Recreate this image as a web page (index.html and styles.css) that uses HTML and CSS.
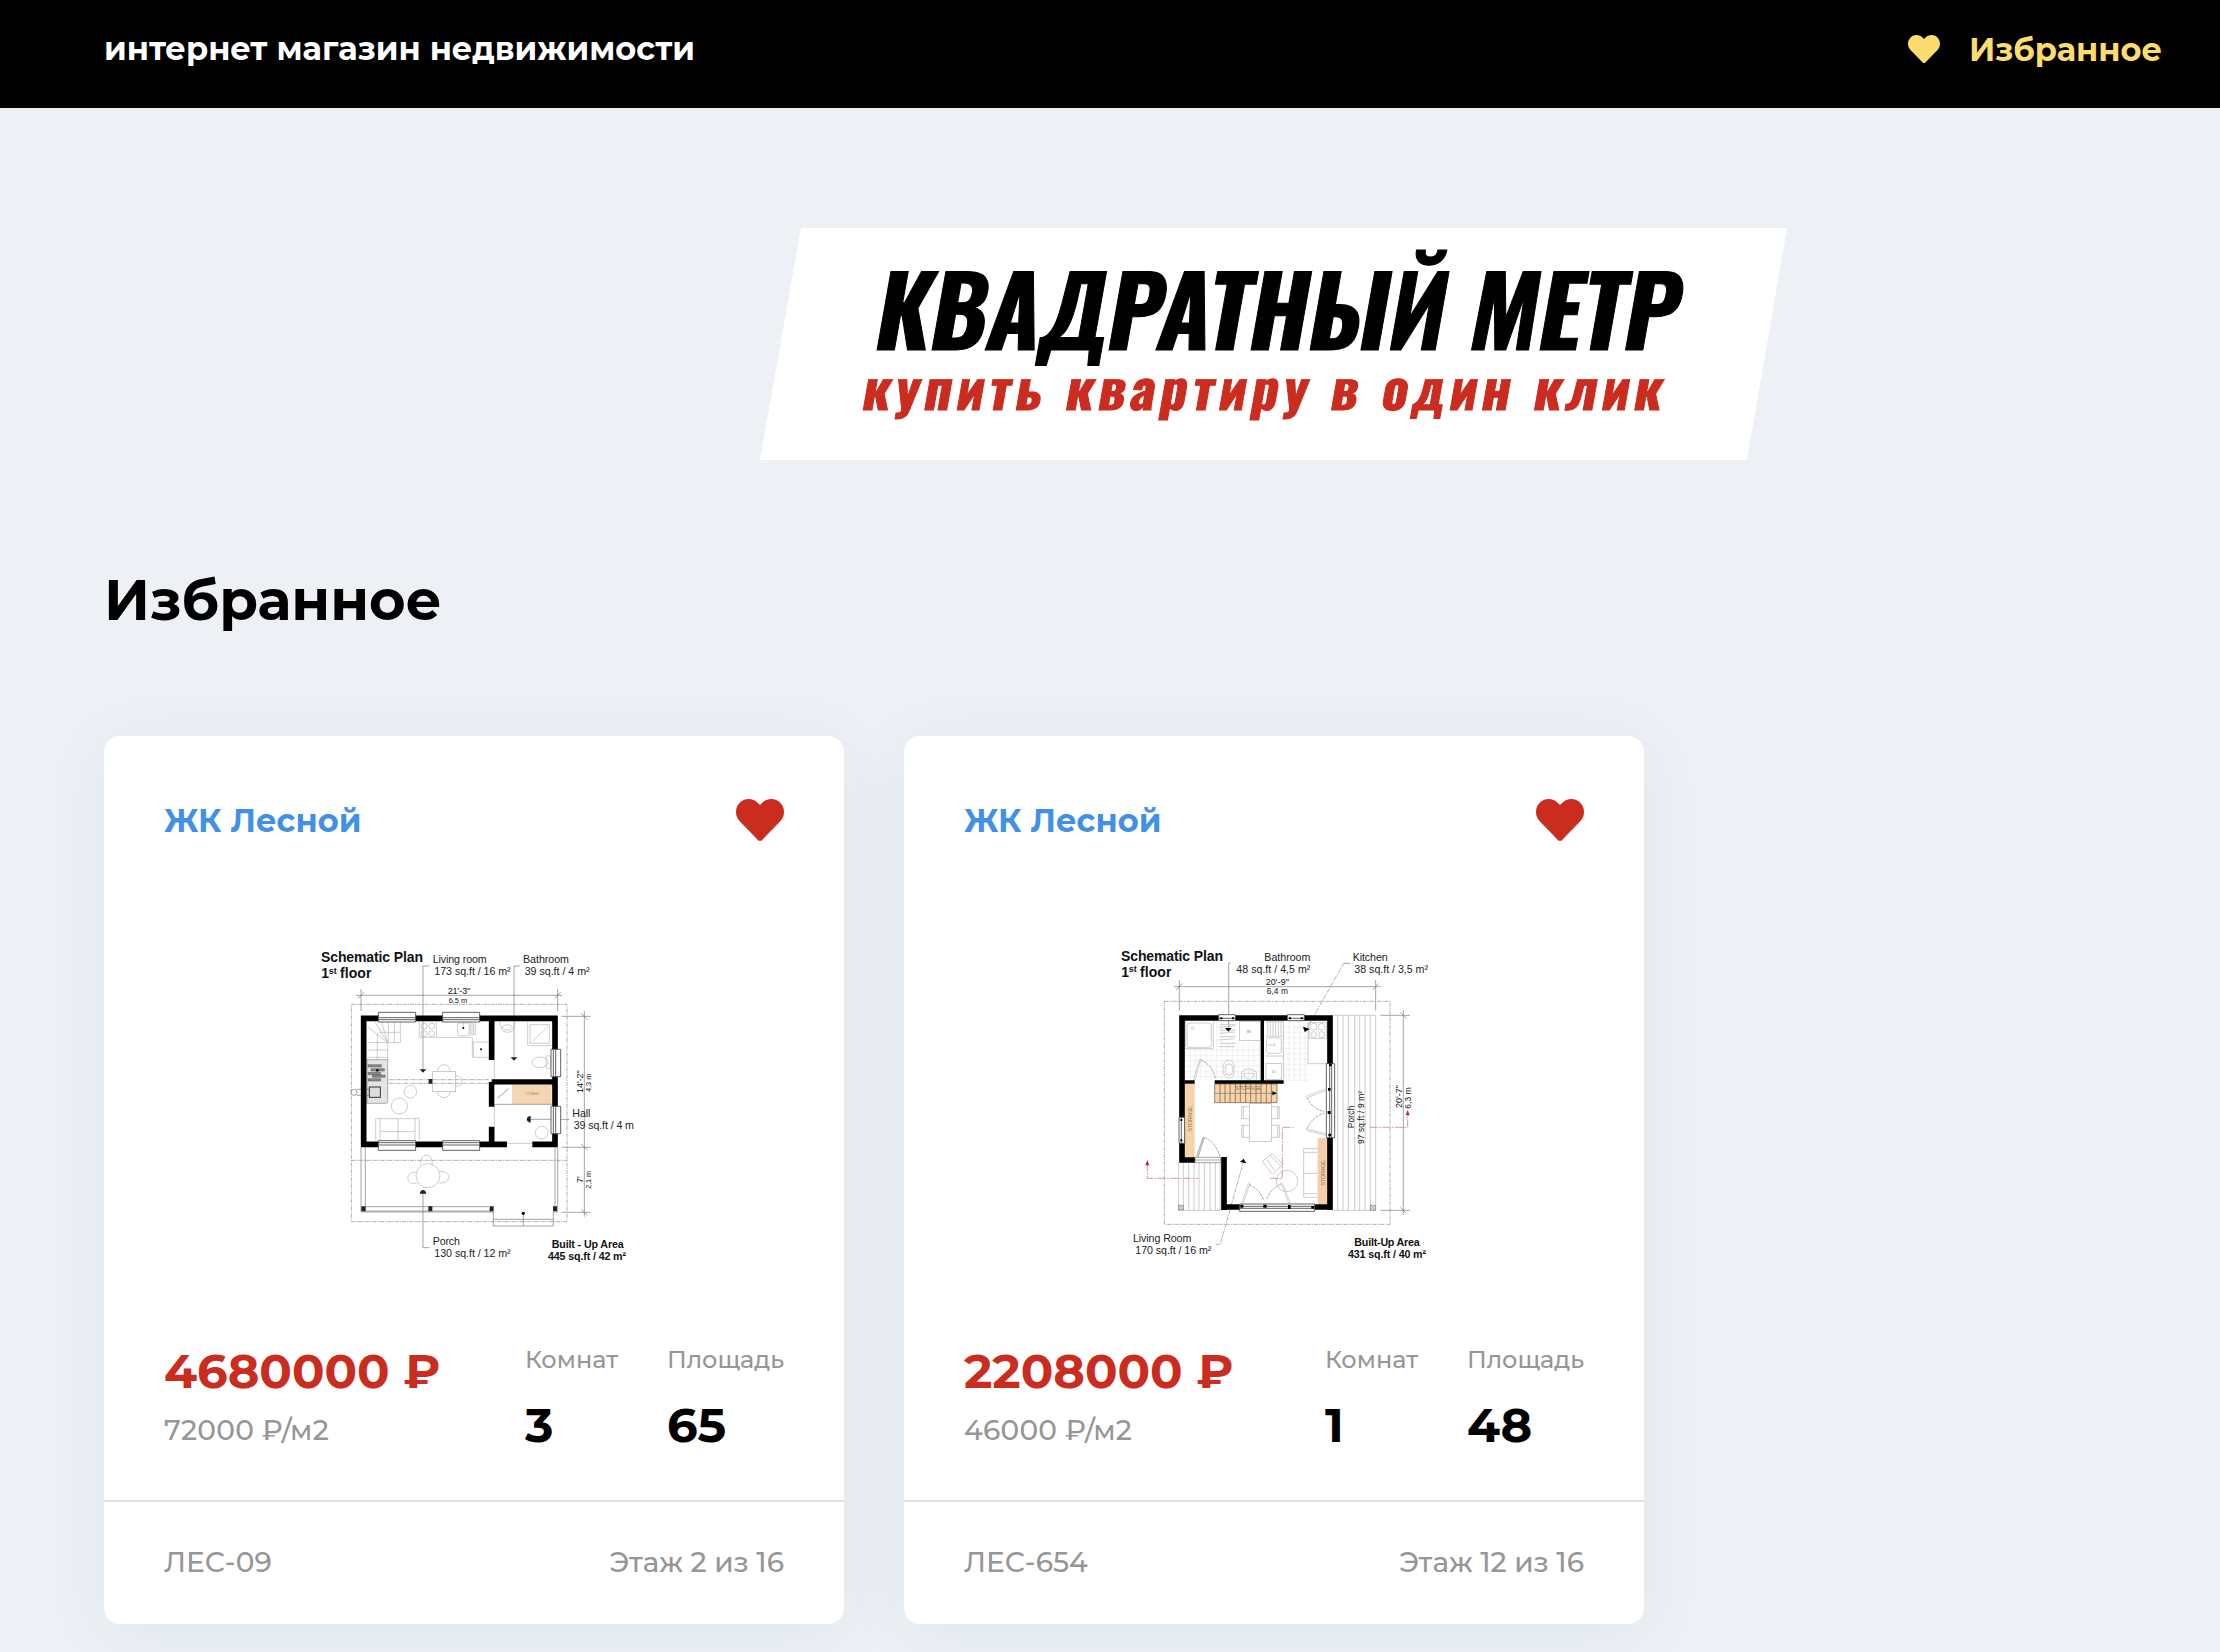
FILE: index.html
```html
<!DOCTYPE html>
<html lang="ru">
<head>
<meta charset="utf-8">
<title>Избранное</title>
<link rel="stylesheet" href="styles.css">
</head>
<body>
<svg class="sprite" width="0" height="0">
  <symbol id="heart" viewBox="0 32 512 448"><path d="M462.3 62.6C407.5 15.9 326 24.3 275.7 76.2L256 96.5l-19.7-20.3C186.1 24.3 104.5 15.9 49.7 62.6c-62.8 53.6-66.1 149.8-9.9 207.9l193.5 199.8c12.5 12.9 32.8 12.9 45.3 0l193.5-199.8c56.3-58.1 53-154.3-9.8-207.9z"/></symbol>
</svg>
<header class="topbar">
  <div class="topbar-name">интернет магазин недвижимости</div>
  <a class="topbar-fav"><svg class="topbar-heart"><use href="#heart"/></svg><span>Избранное</span></a>
</header>
<main class="page">
  <svg class="logo" viewBox="0 0 1026 232" width="1026" height="232">
    <path d="M40 0H1026L986 232H-1z" fill="#fff"/>
    <text class="logo-title" transform="translate(110 122) skewX(-10)" textLength="804" lengthAdjust="spacingAndGlyphs">КВАДРАТНЫЙ МЕТР</text>
    <text class="logo-sub" transform="translate(99.5 182) skewX(-10)" textLength="804" lengthAdjust="spacingAndGlyphs">купить квартиру в один клик</text>
  </svg>
  <h1 class="title">Избранное</h1>
  <section class="cards">
    <article class="card">
      <div class="card-head"><a class="card-name">ЖК Лесной</a><svg class="card-heart"><use href="#heart"/></svg></div>
      <svg class="plan" viewBox="42 36 960 960">
        <g class="thin">
          <path d="M168 196H787M183 177V243M773 177V243M174 206l18-20M764 206l18-20M853 243V860M785 259H872M785 652H872M785 847H872M843 250l20 19M843 642l20 19M843 838l20 19"/>
          <path d="M388 108H369V425M660 108H642V385M388 953H369V785M683 568H808"/>
          <path d="M183 652V846H580M773 652V846H760M196 652V830H567M765 652V830M580 846V888H760V846M580 868H760M670 850V888M190 843H578"/>
        </g>
        <path class="dash" d="M154 223H801V875H154zM154 691H801M202 449H568M202 460H568"/>
        <g class="pale">
          <path d="M202 338H263M202 360H263M202 382H263M232 310V420M263 338L202 290M263 338L225 276M263 338L245 276M263 338V390M235 307H300M265 276V338H301V276M283 276V338"/>
          <path d="M358 276V322H517V382H568M409 276V322M520 336H568M520 336V382"/>
          <circle cx="372" cy="288" r="9"/><circle cx="395" cy="288" r="9"/><circle cx="372" cy="311" r="9"/><circle cx="395" cy="311" r="9"/>
          <rect x="473" y="279" width="34" height="38" rx="5"/><path d="M490 279V296M511 279V317M516 279V317M521 279V317M526 279V317"/>
          <path d="M601 276Q598 306 622 307Q648 306 644 276M607 290Q622 278 637 290Q636 300 622 300Q608 300 607 290"/>
          <path d="M683 276V347H755M690 284H748V340H690zM697 334L744 290"/>
          <ellipse cx="720" cy="397" rx="24" ry="16"/><rect x="738" y="378" width="14" height="38" rx="3"/>
          <rect x="398" y="425" width="69" height="60"/><path d="M413 424Q415 404 432 404Q448 405 450 424M413 486Q415 503 432 503Q448 502 450 486M468 436Q486 439 486 454Q486 467 468 470"/>
          <circle cx="298" cy="528" r="24"/><circle cx="331" cy="485" r="19"/>
          <path d="M227 566H358V630M227 566V630M240 566V630M294 566V630M345 566V630M240 605H345"/>
          <circle cx="725" cy="608" r="19"/><circle cx="384" cy="737" r="36"/>
          <path d="M362 706Q361 676 379 675Q397 676 397 706M350 727Q325 724 323 744Q327 764 352 761M418 724Q444 724 447 741Q444 761 417 759"/>
          <path d="M583 390V448M583 530V590M621 640H699"/>
        </g>
        <path d="M201 389H263V514Q263 520 257 520H201z" fill="#e4e4e4" stroke="#888" stroke-width="2"/>
        <path d="M204 404h40v7h-40zM213 416h40v7h-40zM204 427h38v7h-38zM217 435h38v7h-38zM204 446h38v7h-38z" fill="#888" stroke="#555" stroke-width="1.5"/>
        <path d="M170 478H208V496H170" class="thin"/><circle cx="162" cy="487" r="9" class="thin"/><rect x="208" y="471" width="33" height="31" fill="#ddd" stroke="#333" stroke-width="3"/>
        <path class="wall" d="M183 265H773M191 258V650M183 643H621M697 643H773M575 265V390M575 456H765M765 258V650M575 456V530M575 590V650"/>
        <rect x="584" y="464" width="52" height="58" fill="#fff"/><rect x="636" y="464" width="119" height="58" fill="#f5d5b3"/><path class="thin" d="M584 523H757M592 505L626 476"/><text x="676" y="495" font-size="9" fill="#aa8f70" textLength="41">STORAGE</text>
        <g class="window"><path d="M235 247H347V276H235zM235 263H347M235 269H347"/><path d="M428 247H539V276H428zM428 263H539M428 269H539"/><path d="M235 632H347V661H235zM235 638H347M235 645H347"/><path d="M428 632H539V661H428zM428 638H539M428 645H539"/><path d="M753 358H782V440H753zM760 358V440M767 358V440"/><path d="M753 529H782V611H753zM760 529V611M767 529V611"/></g>
        <path d="M359 418H379L369 428zM632 382H652L642 392zM359 791Q361 781 369 780Q377 781 379 791zM692 558V578Q681 577 680 568Q681 559 692 558zM386 447h11v14h-11zM184 829h13v15h-13zM385 829h12v15h-12zM569 829h12v15h-12zM759 829h12v15h-12z" fill="#222"/><circle cx="670" cy="850" r="5"/><circle cx="543" cy="358" r="3"/><circle cx="490" cy="294" r="3"/><circle cx="232" cy="421" r="4"/>
        <g class="bold"><text x="63" y="96" font-size="42" textLength="306">Schematic Plan</text><text x="64" y="145" font-size="42">1</text><text x="86" y="131" font-size="27" textLength="24">st</text><text x="120" y="145" font-size="42" textLength="94">floor</text>
          <text x="755" y="953" font-size="32" textLength="216">Built - Up Area</text><text x="744" y="989" font-size="32" textLength="234">445 sq.ft / 42 m²</text></g>
        <g class="label"><text x="398" y="100" textLength="162">Living room</text><text x="403" y="136" textLength="229">173 sq.ft / 16 m²</text><text x="669" y="100" textLength="138">Bathroom</text><text x="674" y="136" textLength="195">39 sq.ft / 4 m²</text><text x="817" y="560" textLength="54">Hall</text><text x="821" y="597" textLength="181">39 sq.ft / 4 m</text><text x="398" y="945" textLength="82">Porch</text><text x="403" y="982" textLength="229">130 sq.ft / 12 m²</text></g>
        <g class="dim"><text x="443" y="192" textLength="68" font-size="27">21'-3"</text><text x="446" y="219" textLength="55" font-size="22">6,5 m</text><text transform="translate(848 489) rotate(-90)" textLength="68" font-size="27">14'-2"</text><text transform="translate(872 486) rotate(-90)" textLength="55" font-size="22">4,3 m</text><text transform="translate(848 759) rotate(-90)" font-size="27">7'</text><text transform="translate(872 776) rotate(-90)" textLength="53" font-size="22">2,1 m</text></g>
      </svg>
      <div class="info">
        <div class="price-col"><div class="price">4680000 ₽</div><div class="ppm">72000 ₽/м2</div></div>
        <div class="stat"><div class="stat-label">Комнат</div><div class="stat-value">3</div></div>
        <div class="stat area"><div class="stat-label">Площадь</div><div class="stat-value">65</div></div>
      </div>
      <div class="card-foot"><span>ЛЕС-09</span><span class="floor">Этаж 2 из 16</span></div>
    </article>
    <article class="card">
      <div class="card-head"><a class="card-name">ЖК Лесной</a><svg class="card-heart"><use href="#heart"/></svg></div>
      <svg class="plan" viewBox="42 36 960 960">
        <g class="thin"><path d="M222 170H842M238 150V242M827 150V242M229 180l18-20M818 180l18-20M910 240V855M841 256H930M841 841H930M901 247l19 19M901 832l19 19"/><path d="M392 99H386V295M750 100H731"/></g>
        <path class="dash" d="M193 214H870V883H193zM731 100L620 296M347 943H361L431 693"/>
        <g class="pale"><path d="M697 256H827V841H697M713 256V841M729 256V841M745 256V841M764 256V841M779 256V841M795 256V841M811 256V841"/><path d="M236 697V841H365M250 697V841M266 697V841M282 697V841M297 697V841M313 697V841M330 697V841M346 697V841M360 697V841"/></g>
        <g class="grid"><path d="M255 360H483M255 376H483M255 392H483M255 408H483M255 424H483M255 440H483M270 355V450M286 355V450M302 355V450M318 355V450M334 355V450M350 275V450M366 275V450M382 335V450M398 335V450M414 335V450M430 335V450M446 335V450M462 335V450M478 335V450"/><path d="M551 275V452M567 275V452M583 275V452M599 275V452M615 275V452M551 291H624M551 307H624M551 323H624M551 339H624M551 355H624M551 371H624M551 387H624M551 403H624M551 419H624M551 435H624M551 451H624"/></g>
        <g class="pale">
          <path d="M256 273V356H340V273M359 284H407M356 292L404 288M359 300H407M357 310L404 306M359 320H407M356 330L405 326M359 340H407M357 350H404"/><rect x="261" y="279" width="73" height="74" rx="9" fill="#fff"/><circle cx="278" cy="295" r="4"/>
          <rect x="418" y="275" width="64" height="57" fill="#fff"/><rect x="371" y="391" width="31" height="53" rx="15" fill="#fff"/><rect x="377" y="402" width="20" height="34" rx="9"/><path d="M425 450V426Q446 408 469 426V450M432 430H462Q459 448 446 448Q434 446 432 430"/>
          <path d="M496 275H550V450M496 318H550M503 275V316M511 275V316M519 275V316M527 275V316M535 275V316M543 275V316M496 378H550"/><rect x="500" y="323" width="44" height="47" rx="6"/><path d="M506 345H524M524 338V350"/><rect x="498" y="401" width="47" height="47"/><circle cx="521" cy="425" r="4"/>
          <path d="M624 275V401H681M627 278H680V325H627z"/><circle cx="641" cy="290" r="10"/><circle cx="665" cy="290" r="10"/><circle cx="641" cy="314" r="9"/><circle cx="665" cy="314" r="9"/>
          <rect x="449" y="521" width="65" height="113"/><path d="M447 530H425V566H447M430 530V566M447 586H425V622H447M430 586V622M516 530H538V566H516M533 530V566M516 586H538V622H516M533 586V622"/>
          <path d="M516 670L487 694L517 733L548 704zM510 676L543 710M500 688L522 720"/><circle cx="561" cy="753" r="32"/>
          <path d="M655 656H611V802H655M611 667H655M611 730H655M611 791H655"/>
        </g>
        <path d="M255 462H284V681H255zM344 462H531V518H344z" fill="#f7d3aa"/><path d="M653 624H683V822H653z" fill="#f6cda9"/>
        <path d="M344 462H531V518H344zM360 462V518M375 462V518M390 462V518M406 462V518M421 462V518M437 462V518M452 462V518M468 462V518M483 462V518M499 462V518M514 462V518" fill="none" stroke="#6b5238" stroke-width="2"/><path d="M345 490H520" class="thin"/>
        <g fill="none" stroke="#777" stroke-width="2"><path stroke="#bbb" d="M280 450L299 387M284 452L302 389M425 820L446 757M430 820L450 760M566 820L543 757M571 820L548 760M683 474L617 500M683 480L622 503M683 612L618 597M683 617L622 602"/><path d="M290 680L310 620M294 682L313 622"/><path stroke-dasharray="8 3" d="M302 389Q337 405 346 445M315 624Q345 634 360 680M447 764Q481 779 491 811M543 762Q512 775 499 811M621 503Q636 536 673 545M621 596Q638 559 673 550"/></g>
        <path class="wall" d="M238 264H698M246 256V698M690 256V840M238 690H285M372 681V840M364 831H698"/><path d="M487 265V456M254 456H284M344 456H551" stroke="#000" stroke-width="10"/>
        <path class="thin" d="M285 682H362V698H285zM285 690H362"/>
        <g class="window"><path d="M356 254H406V272H356zM356 265H406"/><path d="M562 254H613V272H562zM562 265H613"/><path d="M237 562H254V640H237zM244 562V640"/><path d="M679 401H704V623H679zM689 401V623M695 401V623"/><path d="M419 822H644V844H419zM419 829H644M419 835H644"/></g>
        <path d="M375 294H395L385 305zM609 290L629 297L614 306zM431 686L439 700L420 696zM517 484L531 490L517 496zM361 262h6v6h-6zM396 262h6v6h-6zM567 262h6v6h-6zM602 262h6v6h-6zM687 401h8v8h-8zM684 474h8v8h-8zM683 543h9v9h-9zM685 611h8v8h-8zM421 824h9v9h-9zM490 824h10v9h-10zM564 825h8v12h-8zM634 828h8v8h-8zM241 567h6v6h-6zM241 628h6v6h-6z"/>
        <path d="M142 700V745H296M511 745H547V592H580M809 592H923V547" fill="none" stroke="#cc6680" stroke-width="2" stroke-dasharray="24 4 6 4"/><path d="M142 690L148 706H136zM923 540L929 556H917z" fill="#c02048"/>
        <path class="thin" d="M236 826H250V840H236zM236 826L250 840M250 826L236 840M811 826H826V840H811zM811 826L826 840M826 826L811 840"/>
        <g class="bold"><text x="63" y="93" font-size="42" textLength="306">Schematic Plan</text><text x="64" y="141" font-size="42">1</text><text x="86" y="127" font-size="27" textLength="24">st</text><text x="120" y="141" font-size="42" textLength="94">floor</text><text x="763" y="947" font-size="32" textLength="196">Built-Up Area</text><text x="744" y="984" font-size="32" textLength="234">431 sq.ft / 40 m²</text></g>
        <g class="label"><text x="493" y="92" textLength="138">Bathroom</text><text x="409" y="128" textLength="222">48 sq.ft / 4,5 m²</text><text x="758" y="93" textLength="105">Kitchen</text><text x="763" y="129" textLength="221">38 sq.ft / 3,5 m²</text><text x="99" y="936" textLength="175">Living Room</text><text x="106" y="972" textLength="228">170 sq.ft / 16 m²</text></g>
        <g class="dim"><text x="497" y="164" textLength="70" font-size="27">20'-9"</text><text x="500" y="191" textLength="64" font-size="25">6,4 m</text><text transform="translate(906 534) rotate(-90)" textLength="69" font-size="27">20'-7"</text><text transform="translate(933 536) rotate(-90)" textLength="64" font-size="25">6,3 m</text><text transform="translate(763 595) rotate(-90)" textLength="68" font-size="25">Porch</text><text transform="translate(793 642) rotate(-90)" textLength="159" font-size="25">97 sq.ft / 9 m²</text></g>
        <g fill="#96785b" font-size="18"><text x="405" y="479" textLength="79">STORAGE</text><text transform="translate(275 605) rotate(-90)" textLength="76">STORAGE</text><text transform="translate(676 767) rotate(-90)" textLength="77">STORAGE</text><text x="440" y="308" font-size="13">W</text></g>
      </svg>
      <div class="info">
        <div class="price-col"><div class="price">2208000 ₽</div><div class="ppm">46000 ₽/м2</div></div>
        <div class="stat"><div class="stat-label">Комнат</div><div class="stat-value">1</div></div>
        <div class="stat area"><div class="stat-label">Площадь</div><div class="stat-value">48</div></div>
      </div>
      <div class="card-foot"><span>ЛЕС-654</span><span class="floor">Этаж 12 из 16</span></div>
    </article>
  </section>
</main>
</body>
</html>
```
FILE: styles.css
```css
* { box-sizing: border-box; }
body { margin: 0; height: 1652px; overflow: hidden; background: #edf1f6; color: #000; font-family: Montserrat, Inter, "Liberation Sans", sans-serif; }
.sprite { display: none; }
.topbar { height: 108px; padding: 0 58px 10px 104px; background: #000; display: flex; align-items: center; justify-content: space-between; font-weight: 700; font-size: 32px; line-height: 40px; white-space: nowrap; }
.topbar-name { color: #fff; }
.topbar-fav { display: flex; align-items: center; gap: 29px; color: #fbdc6d; padding-top: 1px; }
.topbar-heart { width: 32px; height: 28px; margin-bottom: 2px; fill: currentColor; }
.page { padding: 120px 0 0 104px; }
.logo { display: block; margin-left: 657px; overflow: visible; }
.logo-title { font: 700 97px Oswald, "Open Sans", sans-serif; stroke: #000; stroke-width: 1; }
.logo-sub { font: 700 53px Oswald, "Open Sans", sans-serif; letter-spacing: 5px; fill: #cb2c20; stroke: #cb2c20; stroke-width: 1; }
.title { margin: 106px 0 102px; font-size: 56px; line-height: 68px; font-weight: 700; }
.cards { display: flex; gap: 60px; }
.card { width: 740px; height: 888px; padding-top: 60px; background: #fff; border-radius: 16px; box-shadow: 0 10px 70px rgba(0, 48, 20, .06); }
.card-head { height: 48px; margin: 0 60px; display: flex; align-items: center; justify-content: space-between; }
.card-name { padding-top: 2px; color: #4091e4; font-size: 32px; line-height: 40px; font-weight: 700; }
.card-heart { width: 48px; height: 42px; fill: #cb2c20; }
.plan { display: block; width: 320px; height: 320px; margin: 98px auto 81px; overflow: hidden; font-family: "Liberation Sans", Arial, sans-serif; }
.thin { fill: none; stroke: #777; stroke-width: 2; }
.pale { fill: none; stroke: #b4b4b4; stroke-width: 2; }
.grid { fill: none; stroke: #e2e2e2; stroke-width: 1.5; }
.dash { fill: none; stroke: #888; stroke-width: 2; stroke-dasharray: 12 3 4 3; }
.wall { fill: none; stroke: #000; stroke-width: 17; }
.window { fill: #fff; stroke: #444; stroke-width: 2.5; }
.bold { font-weight: 700; fill: #111; }
.label { font-size: 32px; fill: #222; }
.dim { fill: #111; }
.info { height: 157px; padding: 0 60px; display: flex; }
.price-col { width: 361px; }
.price { color: #cb2c20; font-size: 48px; line-height: 56px; font-weight: 700; white-space: nowrap; }
.ppm { margin-top: 13px; font-size: 28px; line-height: 36px; font-weight: 500; letter-spacing: .25px; color: #969696; }
.stat { width: 142px; padding-top: 2px; }
.area { width: 117px; }
.stat-label { margin-bottom: 22px; font-size: 24px; line-height: 30px; font-weight: 500; color: #969696; }
.stat-value { font-size: 48px; line-height: 56px; font-weight: 700; }
.card-foot { height: 124px; padding: 0 60px 2px; border-top: 2px solid #e1e1e1; display: flex; align-items: center; justify-content: space-between; font-size: 28px; line-height: 36px; font-weight: 500; color: #969696; }
```
